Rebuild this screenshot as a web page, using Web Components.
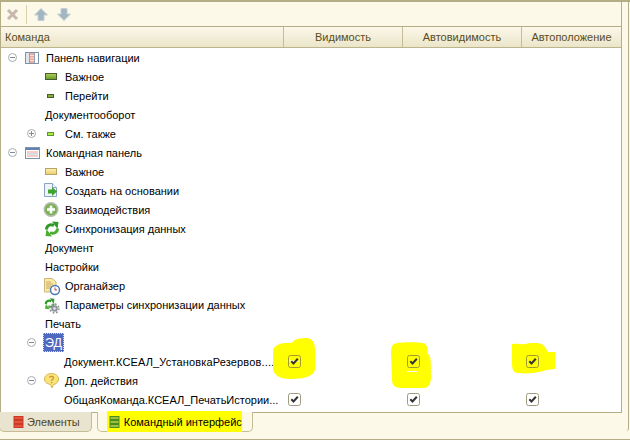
<!DOCTYPE html>
<html lang="ru">
<head>
<meta charset="utf-8">
<title>Командный интерфейс</title>
<style>
html, body { margin: 0; padding: 0; background: #fff; }
body { font: 11px "Liberation Sans", Arial, sans-serif; color: #000; overflow: hidden; }
</style>
</head>
<body>
<conf-window>
	<conf-toolbar slot="toolbar"></conf-toolbar>
	<tree-header slot="header"></tree-header>

	<tree-row level="0" toggle="minus" icon="navpanel">Панель навигации</tree-row>
	<tree-row level="1" icon="bar-big">Важное</tree-row>
	<tree-row level="1" icon="bar-small">Перейти</tree-row>
	<tree-row level="1" plain>Документооборот</tree-row>
	<tree-row level="1" toggle="plus" icon="bar-light">См. также</tree-row>
	<tree-row level="0" toggle="minus" icon="cmdpanel">Командная панель</tree-row>
	<tree-row level="1" icon="bar-yellow">Важное</tree-row>
	<tree-row level="1" icon="create">Создать на основании</tree-row>
	<tree-row level="1" icon="plus-circle">Взаимодействия</tree-row>
	<tree-row level="1" icon="sync">Синхронизация данных</tree-row>
	<tree-row level="1" plain>Документ</tree-row>
	<tree-row level="1" plain>Настройки</tree-row>
	<tree-row level="1" icon="organizer">Органайзер</tree-row>
	<tree-row level="1" icon="sync-gear">Параметры синхронизации данных</tree-row>
	<tree-row level="1" plain>Печать</tree-row>
	<tree-row level="1" toggle="minus" plain selected>ЭД</tree-row>
	<tree-row level="2" plain style="letter-spacing:.15px">Документ.КСЕАЛ_УстановкаРезервов....
		<check-cell slot="cols" marked="a"></check-cell>
		<check-cell slot="cols" marked="b"></check-cell>
		<check-cell slot="cols" marked="c"></check-cell>
	</tree-row>
	<tree-row level="1" toggle="minus" icon="help">Доп. действия</tree-row>
	<tree-row level="2" plain>ОбщаяКоманда.КСЕАЛ_ПечатьИстории...
		<check-cell slot="cols"></check-cell>
		<check-cell slot="cols"></check-cell>
		<check-cell slot="cols"></check-cell>
	</tree-row>

	<tab-item slot="tabs" color="red">Элементы</tab-item>
	<tab-item slot="tabs" color="green" active>Командный интерфейс</tab-item>
</conf-window>

<script>
const SYNC_ARROWS = `<path d="M2.500 8.500C2.500 4.500 6.500 2.500 10 4.500" fill="none" stroke="#2f9a28" stroke-width="3"/>
		<path d="M8 .5L14.500 1 13.500 8z" fill="#2f9a28"/>
		<path d="M13.500 7.500C13.500 11.500 9.500 13.500 6 11.500" fill="none" stroke="#4aae30" stroke-width="3"/>
		<path d="M8 15.500L1.500 15 2.500 8z" fill="#4aae30"/>`;

const ICONS = {
	"navpanel": `<rect x=".5" y="2.5" width="13" height="11" fill="#fff" stroke="#7f93a8"/>
		<rect x="1" y="3" width="3" height="10" fill="#dfe6ee"/>
		<rect x="5" y="3" width="4" height="10" fill="#f2a79c"/>
		<path d="M5 5.5h4M5 8h4M5 10.5h4" stroke="#fbe0da"/>
		<path d="M4.500 3v10M9.500 3v10" stroke="#8fa2b6"/>`,
	"cmdpanel": `<rect x=".5" y="2.500" width="14" height="11" fill="#fff" stroke="#7f93a8"/>
		<rect x="1" y="3" width="13" height="2" fill="#5f84b4"/>
		<path d="M2 7h11" stroke="#f09a8e"/><path d="M2 9h11" stroke="#a9bdd2"/><path d="M2 11h11" stroke="#f09a8e"/>`,
	"bar-big": `<defs><linearGradient id="g1" x2="0" y2="1"><stop offset="0" stop-color="#b4d060"/><stop offset="1" stop-color="#5e9a20"/></linearGradient></defs>
		<rect x="1.500" y="4.500" width="11" height="6" fill="url(#g1)" stroke="#4c5a30"/>`,
	"bar-small": `<rect x="3.500" y="6.500" width="6" height="3" fill="#86b23a" stroke="#4c5a30"/>`,
	"bar-light": `<rect x="3.500" y="6.500" width="6" height="3" fill="#b6e44a" stroke="#4c9a30"/>`,
	"bar-yellow": `<defs><linearGradient id="g2" x2="0" y2="1"><stop offset="0" stop-color="#fff2b4"/><stop offset="1" stop-color="#eccb68"/></linearGradient></defs>
		<rect x="1.500" y="4.500" width="11" height="6" fill="url(#g2)" stroke="#b8a468"/>`,
	"create": `<path d="M.5.5h8l4 4v9H.5z" fill="#eef3fa" stroke="#8aa4c4"/>
		<path d="M8.500.5v4h4" fill="#fff" stroke="#8aa4c4"/>
		<path d="M4 6.500h4V4l5 4.500L8 13v-2.500H4z" fill="#3fa32c"/>`,
	"plus-circle": `<defs><radialGradient id="g3"><stop offset="0" stop-color="#a8d880"/><stop offset="1" stop-color="#6aa848"/></radialGradient></defs>
		<circle cx="7" cy="7.500" r="7.500" fill="#b4bcac"/><circle cx="7" cy="7.500" r="5.800" fill="url(#g3)"/>
		<path d="M7 3.500v8M3 7.500h8" stroke="#fff" stroke-width="2.400"/>`,
	"sync": SYNC_ARROWS,
	"organizer": `<path d="M.5.5h8l3.500 3.500v10H.5z" fill="#fbe9a8" stroke="#cdb678"/>
		<path d="M2 4h5M2 6h7M2 8h5M2 10h4" stroke="#c8a860"/>
		<circle cx="11" cy="12" r="4.500" fill="#fff" stroke="#4a78b8" stroke-width="1.500"/>
		<path d="M11 9.500V12h2" fill="none" stroke="#c04838"/>`,
	"sync-gear": `<g transform="translate(0 1) scale(.72)">${SYNC_ARROWS}</g>
		<circle cx="10.500" cy="11.500" r="3.300" fill="#8f959c"/><circle cx="10.500" cy="11.500" r="4.400" fill="none" stroke="#8f959c" stroke-width="1.600" stroke-dasharray="1.700 1.750"/>
		<circle cx="10.500" cy="11.500" r="1.300" fill="#e8eaee"/>`,
	"help": `<path d="M7.500.5c4 0 7 2.300 7 5.500s-3 5.500-5 5.500L8 15l-1.500-3.600C3 11 .5 9 .5 6 .5 2.800 3.500.5 7.500.5z" fill="#f8e27a" stroke="#d8b850"/>
		<path d="M5.500 4.500c.5-1.500 4-1.500 4 .5 0 1.300-2 1.300-2 3" fill="none" stroke="#d09028" stroke-width="1.200"/>
		<rect x="7" y="9" width="1.200" height="1.200" fill="#d09028"/>`
};

// база для элементов с одним шаблоном
class ShadowBase extends HTMLElement {
	constructor() {
		super();
		this.root = this.attachShadow({mode: "open"});
	}
}

class ConfWindow extends ShadowBase {
	connectedCallback() {
		this.root.innerHTML = `<style>
		:host { display: flex; flex-direction: column; width: 630px; height: 440px; box-sizing: border-box;
			background: #fcf9e9; border-top: 2px solid #b5ad85; border-bottom: 1px solid #b5ad85; }
		.work { display: flex; flex: 1; min-height: 0; }
		.left { width: 622px; display: flex; flex-direction: column; }
		.panel { height: 411px; box-sizing: border-box; border-right: 1px solid #b5ad85; border-left: 1px solid #b5ad85;
			border-bottom: 1px solid #b5ad85; display: flex; flex-direction: column; }
		.body { flex: 1; background: #fff; }
		.tabs { display: flex; gap: 5px; align-items: flex-start; position: relative; top: -1px; }
		.strip { width: 7px; height: 429px; box-sizing: border-box; border-right: 1px solid #b5ad85;
			border-bottom-right-radius: 3px; }
		</style>
		<div class="work">
			<div class="left">
				<div class="panel">
					<slot name="toolbar"></slot>
					<slot name="header"></slot>
					<div class="body"><slot></slot></div>
				</div>
				<div class="tabs"><slot name="tabs"></slot></div>
			</div>
			<div class="strip"></div>
		</div>`;
	}
}

class ConfToolbar extends ShadowBase {
	connectedCallback() {
		this.root.innerHTML = `<style>
		:host { display: flex; height: 25px; box-sizing: border-box; align-items: center; padding-left: 5px;
			border-bottom: 1px solid #b5ad85; }
		svg { display: block; }
		.sep { width: 1px; height: 19px; background: #d8d2ae; margin: 0 7px 0 7px; }
		.a { margin-right: 9px; }
		</style>
		<svg width="13" height="13" viewBox="0 0 13 13"><path d="M2 2l9 9M11 2l-9 9" stroke="#c9b7ad" stroke-width="3"/></svg>
		<span class="sep"></span>
		<svg class="a" width="14" height="13" viewBox="0 0 14 13"><path d="M7 .5L13.500 7H10v5.500H4V7H.5z" fill="#a3b5c0" stroke="#c4d0d6"/></svg>
		<svg width="14" height="13" viewBox="0 0 14 13"><path d="M7 12.500L13.500 6H10V.5H4V6H.5z" fill="#a3b5c0" stroke="#c4d0d6"/></svg>`;
	}
}

class TreeHeader extends ShadowBase {
	connectedCallback() {
		this.root.innerHTML = `<style>
		:host { display: grid; grid-template-columns: 283px 119px 119px 99px; height: 21px; box-sizing: border-box;
			background: linear-gradient(#fbf8ea, #ebe5c9); border-bottom: 1px solid #bcb48c; color: #5b4d1c; line-height: 20px; }
		div { border-right: 1px solid #c4bc96; text-align: center; box-sizing: border-box; white-space: nowrap; }
		.first { text-align: left; padding-left: 4px; }
		.last { border-right: 0; }
		</style>
		<div class="first">Команда</div><div>Видимость</div><div>Автовидимость</div><div class="last">Автоположение</div>`;
	}
}

class TreeRow extends ShadowBase {
	connectedCallback() {
		const level = +this.getAttribute("level");
		const toggle = this.getAttribute("toggle");
		const icon = this.getAttribute("icon");
		const pad = 6 + level * 19;
		var tw = "";
		if(toggle) {
			const bar = toggle == "plus" ? `<path d="M5.500 3v5" stroke="#808a94"/>` : "";
			tw = `<svg width="11" height="11" viewBox="0 0 11 11"><circle cx="5.500" cy="5.500" r="4" fill="#fff" stroke="#a8adb2"/><path d="M3 5.500h5" stroke="#808a94"/>${bar}</svg>`;
		}
		var ic = "";
		if(icon)
			ic = `<span class="ico"><svg width="16" height="16" viewBox="0 0 16 16">${ICONS[icon]}</svg></span>`;
		this.root.innerHTML = `<style>
		:host { display: grid; grid-template-columns: 283px 119px 119px 99px; height: 19px; line-height: 21px; color: #000; }
		.name { display: flex; align-items: flex-start; white-space: nowrap; padding-left: ${pad}px; height: 19px; }
		.tw { width: 19px; flex: none; height: 19px; }
		.tw svg { display: block; margin-top: 4px; }
		.ico { width: 20px; flex: none; height: 19px; }
		.ico svg { display: block; margin: 2px 0 0 -1px; overflow: visible; }
		.sel { display: block; height: 19px; background: #4f69c1; color: #fff; margin-left: -2px; padding: 0 2px; outline: 1px dotted #cdd6f0; outline-offset: -1px; font-size: 12.5px; }
		</style>
		<div class="name"><span class="tw">${tw}</span>${ic}<span class="${this.hasAttribute("selected") ? "sel" : ""}"><slot></slot></span></div>
		<slot name="cols"></slot>`;
	}
}

const BLOBS = {
	a: {x: -11, y: -14, w: 43, h: 42, d: "M3 8C8 4 14 5 19 5C20 1 28 0 34 0C40 1 42 5 42 12L42 32C40 38 32 41 18 41C8 41 1 38 0 31L0 14C0 11 1 9 3 8Z", s: "M12 22l16 1-8 1z"},
	b: {x: -12, y: -10, w: 41, h: 47, d: "M3 2C8 0 24 0 32 1C36 2 37 6 37 12C40 14 40 18 40 34C40 42 38 46 32 46L10 46C4 46 1 43 1 38L0 10C0 6 1 3 3 2Z", s: "M16 29h10v1H16z"},
	c: {x: -10, y: -9, w: 44, h: 31, d: "M0 1C6 0 10 2 13 1C20-1 30-1 33 4L36 9L43 9L43 26L34 27C28 30 12 31 5 30C1 29 0 26 0 20Z", s: ""}
};

class CheckCell extends ShadowBase {
	connectedCallback() {
		const m = BLOBS[this.getAttribute("marked")];
		var blob = "";
		if(m)
			blob = `<svg class="blob" width="${m.w}" height="${m.h}" style="left:${m.x}px;top:${m.y}px"><path d="${m.d}" fill="#ff0"/><path d="${m.s}" fill="#fff"/></svg>`;
		this.root.innerHTML = `<style>
		:host { display: block; position: relative; padding: 3px 0 0 4px; height: 19px; box-sizing: border-box; }
		.blob { position: absolute; }
		.box { position: relative; display: block; }
		</style>
		${blob}
		<svg class="box" width="13" height="13" viewBox="0 0 13 13">
			<rect x=".5" y=".5" width="12" height="12" rx="2" fill="${m ? "none" : "#fff"}" stroke="${m ? "#a09a30" : "#a09a80"}"/>
			<path d="M3.300 6.300L5.500 8.500L9.800 3.800" fill="none" stroke="#333" stroke-width="2"/>
		</svg>`;
	}
}

class TabItem extends ShadowBase {
	connectedCallback() {
		const active = this.hasAttribute("active");
		const cols = this.getAttribute("color") == "red"
			? ["#e8523a", "#c83a28"] : ["#9cc23c", "#4e8a20"];
		const bars = [0, 4, 8].map(y =>
			`<rect x=".5" y="${y + .5}" width="9" height="3" fill="${cols[0]}" stroke="${cols[1]}"/>`).join("");
		this.root.innerHTML = `<style>
		:host { display: flex; align-items: center; height: 20px; box-sizing: border-box; position: relative;
			border: 1px solid #c4bc96; border-top: 0; border-radius: 0 0 5px 5px;
			background: ${active ? "#fcf9e9" : "#e9e4cf"}; color: ${active ? "#000" : "#51461c"};
			padding: ${active ? "0 10px 0 11px" : "0 11px 0 13px"}; margin-left: ${active ? "0" : "-1px"}; }
		svg { display: block; margin-right: ${active ? 4 : 3}px; position: relative; }
		span { position: relative; white-space: nowrap; }
		.mark { position: absolute; left: 9px; right: 10px; top: -1px; bottom: -1px; background: #ff0; }
		</style>
		${active ? `<div class="mark"></div>` : ""}
		<svg width="11" height="12" viewBox="0 0 10 12">${bars}</svg>
		<span><slot></slot></span>`;
	}
}

customElements.define("conf-window", ConfWindow);
customElements.define("conf-toolbar", ConfToolbar);
customElements.define("tree-header", TreeHeader);
customElements.define("tree-row", TreeRow);
customElements.define("check-cell", CheckCell);
customElements.define("tab-item", TabItem);
</script>
</body>
</html>
